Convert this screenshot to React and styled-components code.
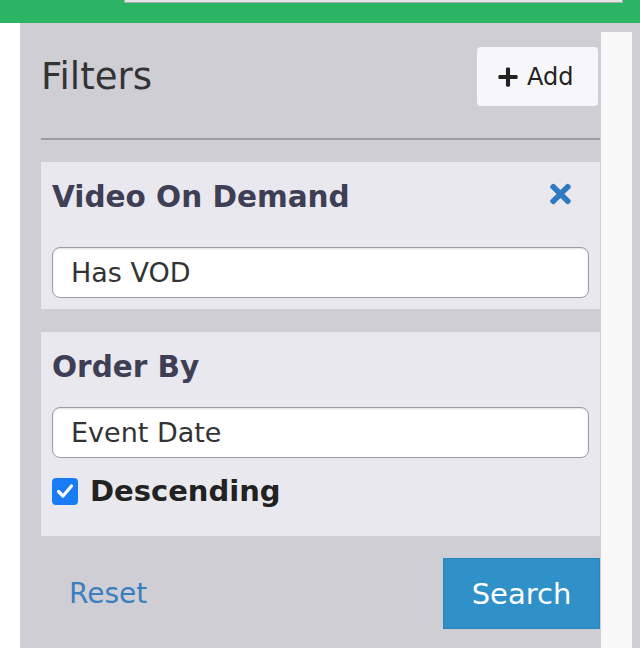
import React from "react";
import styled, { createGlobalStyle } from "styled-components";
import { FaPlus, FaTimes } from "react-icons/fa";

const GlobalStyle = createGlobalStyle`
  html, body {
    margin: 0;
    padding: 0;
    background: #ffffff;
    font-family: "DejaVu Sans", Verdana, sans-serif;
  }
  * {
    box-sizing: border-box;
  }
`;

const Page = styled.div`
  width: 640px;
  height: 648px;
  display: flex;
  flex-direction: column;
  overflow: hidden;
`;

const TopBar = styled.div`
  height: 23px;
  flex-shrink: 0;
  background: #2cb465;
  padding-left: 124px;
`;

const TopSearch = styled.div`
  width: 499px;
  height: 3px;
  background: #e4e4e6;
  border: 1px solid #a9b0ab;
  border-top: none;
`;

const Body = styled.div`
  flex: 1;
  display: flex;
`;

const Gutter = styled.div`
  width: 20px;
  background: #ffffff;
`;

const Panel = styled.div`
  flex: 1;
  display: flex;
  background: #cfced4;
`;

const Sidebar = styled.div`
  flex: 1;
  display: flex;
  flex-direction: column;
  padding: 24px 0 0 21px;
`;

const ScrollTrack = styled.div`
  width: 31px;
  margin: 9px 8px 0 1px;
  background: #f8f8f8;
`;

const HeaderRow = styled.div`
  display: flex;
  align-items: center;
  justify-content: space-between;
`;

const Title = styled.h2`
  margin: 0;
  font-size: 37px;
  line-height: 44px;
  font-weight: normal;
  color: #333336;
`;

const AddButton = styled.button`
  display: flex;
  align-items: center;
  gap: 8px;
  height: 59px;
  width: 121px;
  margin-right: 2px;
  padding: 0 0 0 20px;
  border: none;
  border-radius: 4px;
  background: #f7f7f9;
  font-family: inherit;
  font-size: 24px;
  color: #222;
  svg {
    width: 22px;
    height: 22px;
  }
`;

const Divider = styled.hr`
  margin: 32px 0 0;
  border: none;
  height: 2px;
  background: #9c9ca2;
`;

const Card = styled.section`
  margin-top: ${({ $gap }) => $gap}px;
  padding: 17px 11px 11px;
  background: #e8e8ee;
`;

const CardHead = styled.div`
  display: flex;
  align-items: center;
  justify-content: space-between;
  margin-bottom: ${({ $space }) => $space}px;
`;

const CardTitle = styled.h3`
  margin: 0;
  font-size: 29.5px;
  line-height: 36px;
  font-weight: bold;
  color: #3e3e55;
`;

const CloseIcon = styled.span`
  display: flex;
  margin: 0 18px 6px 0;
  color: #2f79c0;
  svg {
    width: 21px;
    height: 30px;
  }
`;

const Field = styled.div`
  height: 51px;
  display: flex;
  align-items: center;
  padding-left: 18px;
  background: #ffffff;
  border: 1px solid #9d9da3;
  border-radius: 8px;
  box-shadow: inset 0 1px 2px rgba(0, 0, 0, 0.12);
  font-size: 27px;
  color: #333333;
`;

const CheckRow = styled.label`
  display: flex;
  align-items: center;
  gap: 12px;
  margin-top: 16px;
  margin-bottom: 17px;
  font-size: 29px;
  font-weight: bold;
  color: #222222;
`;

const CheckBox = styled.span`
  width: 26px;
  height: 27px;
  border-radius: 4px;
  background: #1a7cf4;
  display: flex;
  align-items: center;
  justify-content: center;
`;

const Footer = styled.div`
  margin-top: 22px;
  display: flex;
  align-items: center;
  justify-content: space-between;
  padding-left: 28px;
`;

const ResetLink = styled.a`
  font-size: 28px;
  color: #3b7ec0;
  text-decoration: none;
`;

const SearchButton = styled.button`
  width: 157px;
  height: 71px;
  border: 1px solid #2a84bb;
  border-radius: 0;
  background: #3090c8;
  color: #ffffff;
  font-family: inherit;
  font-size: 29px;
  padding: 0;
`;

export default function App() {
  return (
    <Page>
      <GlobalStyle />
      <TopBar>
        <TopSearch />
      </TopBar>
      <Body>
        <Gutter />
        <Panel>
          <Sidebar>
            <HeaderRow>
              <Title>Filters</Title>
              <AddButton>
                <FaPlus />
                Add
              </AddButton>
            </HeaderRow>
            <Divider />

            <Card $gap={22}>
              <CardHead $space={32}>
                <CardTitle>Video On Demand</CardTitle>
                <CloseIcon>
                  <FaTimes />
                </CloseIcon>
              </CardHead>
              <Field>Has VOD</Field>
            </Card>

            <Card $gap={23}>
              <CardHead $space={22}>
                <CardTitle>Order By</CardTitle>
              </CardHead>
              <Field>Event Date</Field>
              <CheckRow>
                <CheckBox>
                  <svg width="18" height="16" viewBox="0 0 18 16">
                    <path
                      d="M2.5 8.5 L7 13 L15.5 3"
                      fill="none"
                      stroke="#fff"
                      strokeWidth="3.2"
                      strokeLinecap="round"
                      strokeLinejoin="round"
                    />
                  </svg>
                </CheckBox>
                Descending
              </CheckRow>
            </Card>

            <Footer>
              <ResetLink href="#">Reset</ResetLink>
              <SearchButton>Search</SearchButton>
            </Footer>
          </Sidebar>
          <ScrollTrack />
        </Panel>
      </Body>
    </Page>
  );
}
